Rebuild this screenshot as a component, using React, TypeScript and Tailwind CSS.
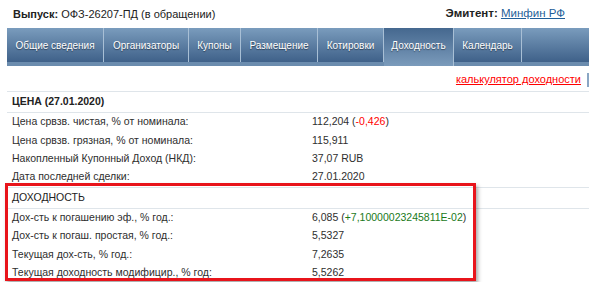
import { type ReactNode } from "react";

const tabs = [
  { label: "Общие сведения", w: "w-[97px]" },
  { label: "Организаторы", w: "w-[85px]" },
  { label: "Купоны", w: "w-[52px]" },
  { label: "Размещение", w: "w-[77px]" },
  { label: "Котировки", w: "w-[66px]" },
  { label: "Доходность", w: "w-[70px]", active: true },
  { label: "Календарь", w: "w-[68px]" },
];

function Row({ label, children }: { label: string; children: ReactNode }) {
  return (
    <div className="flex h-[18.4px] items-center">
      <div className="w-[305px] pl-[5px]">{label}</div>
      <div>{children}</div>
    </div>
  );
}

function SectionTitle({ children, bold }: { children: ReactNode; bold?: boolean }) {
  return (
    <div
      className={`flex h-[21px] items-center border-b border-[#dfe5ea] pl-[5px] text-[10.5px] text-[#222] ${
        bold ? "font-bold" : "font-normal"
      }`}
    >
      {children}
    </div>
  );
}

export default function App() {
  return (
    <div className="relative h-[282px] w-[589px] overflow-hidden bg-white font-['Liberation_Sans',Arial,sans-serif] text-[10.5px] text-[#2e2e2e]">
      <div className="flex h-[28px] items-center justify-between pl-[13px] pr-[24px] text-[11px] text-[#222]">
        <div>
          <span className="font-bold">Выпуск:</span> ОФЗ-26207-ПД (в обращении)
        </div>
        <div className="text-[11.5px]">
          <span className="font-bold">Эмитент:</span>{" "}
          <span className="text-[#1f5f99] underline">Минфин РФ</span>
        </div>
      </div>

      <div className="ml-[7px] bg-[#6b8cae] pb-[4px]">
        <div className="flex h-[34px] bg-gradient-to-b from-[#7a9cbd] to-[#3f6189]">
          {tabs.map((t) => (
            <div
              key={t.label}
              className={`${t.w} flex shrink-0 items-center justify-center border-r border-[#a8bfd5] text-[10px] text-white [text-shadow:0_1px_1px_rgba(0,0,0,0.45)] ${
                t.active ? "-mb-[4px] h-[38px] bg-gradient-to-b from-[#45688f] to-[#7b9bbb] pb-[4px]" : ""
              }`}
            >
              {t.label}
            </div>
          ))}
          <div className="flex-1" />
        </div>
      </div>

      <div className="flex h-[25px] items-center justify-end pt-[2px]">
        <span className="text-[11px] text-[#f00] underline">калькулятор доходности</span>
        <span className="ml-[6px] h-[14px] w-[2px] bg-[#8aa6c4]" />
      </div>

      <div className="ml-[7px] border-t border-[#dfe5ea]">
        <SectionTitle bold>ЦЕНА (27.01.2020)</SectionTitle>
        <Row label="Цена срвзв. чистая, % от номинала:">
          112,204 (<span className="text-[#f00]">-0,426</span>)
        </Row>
        <Row label="Цена срвзв. грязная, % от номинала:">115,911</Row>
        <Row label="Накопленный Купонный Доход (НКД):">37,07 RUB</Row>
        <Row label="Дата последней сделки:">27.01.2020</Row>
        <div className="border-t border-[#dfe5ea]">
          <SectionTitle>ДОХОДНОСТЬ</SectionTitle>
          <Row label="Дох-сть к погашению эф., % год.:">
            6,085 (<span className="text-[#1a7a1a]">+7,10000023245811E-02</span>)
          </Row>
          <Row label="Дох-сть к погаш. простая, % год.:">5,5327</Row>
          <Row label="Текущая дох-сть, % год.:">7,2635</Row>
          <Row label="Текущая доходность модифицир., % год:">5,5262</Row>
          <div className="border-t border-[#dfe5ea]" />
        </div>
      </div>

      <div className="absolute left-[5px] top-[183px] h-[98px] w-[471px] border-[3px] border-[#e8141b] shadow-[2px_3px_4px_rgba(0,0,0,0.35)]" />
    </div>
  );
}
